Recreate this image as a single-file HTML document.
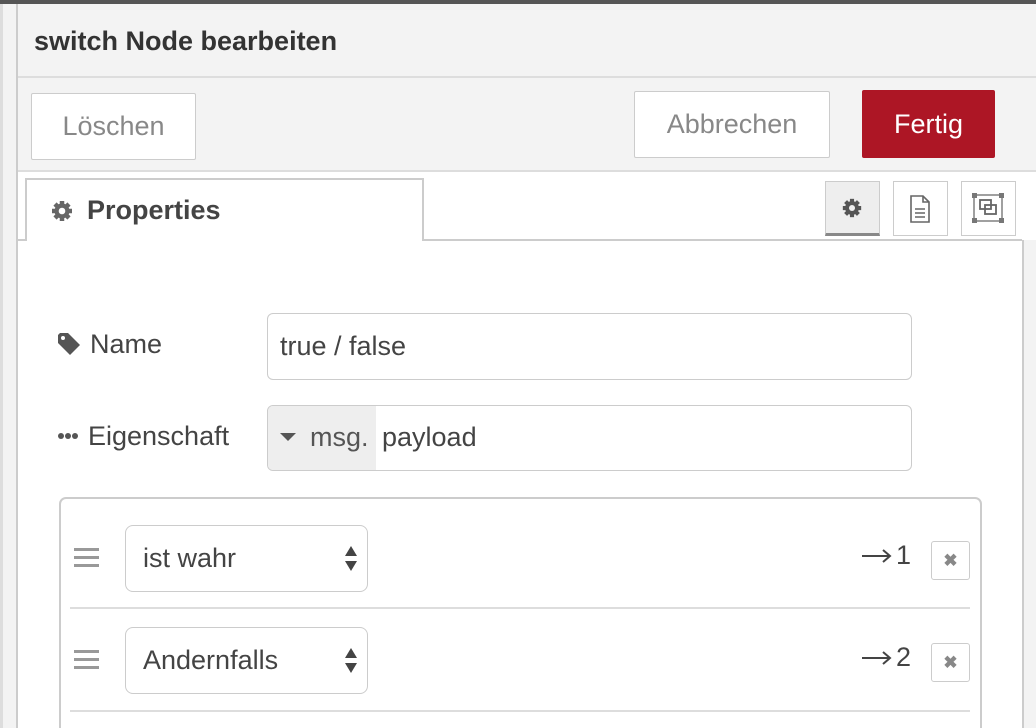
<!DOCTYPE html>
<html><head><meta charset="utf-8"><style>
*{box-sizing:border-box;margin:0;padding:0}
html,body{width:1036px;height:728px;overflow:hidden}
body{background:#fff;font-family:"Liberation Sans",Helvetica,Arial,sans-serif;color:#444;position:relative}
.a{position:absolute}
.btn{position:absolute;background:#fff;border:1px solid #ccc;color:#888;font-size:27px;display:flex;align-items:center;justify-content:center;border-radius:2px}
.inp{position:absolute;border:1px solid #ccc;border-radius:6px;background:#fff;font-size:27px;color:#444;overflow:hidden}
.sel{position:absolute;border:1px solid #ccc;border-radius:8px;background:#fff;font-size:27px;color:#444;padding-left:17px;display:flex;align-items:center}
.hd{position:absolute;width:25px;height:3px;background:#999;left:74px}
.x{position:absolute;width:39px;height:39px;border:1px solid #ccc;border-radius:3px;left:931px;display:flex;align-items:center;justify-content:center;color:#888;font-size:17px;font-weight:bold}
.arr{position:absolute;left:862px;font-size:27px;color:#444}
</style></head><body>
<div class="a" style="left:0;top:0;width:1036px;height:4px;background:#555"></div>
<div class="a" style="left:0;top:4px;width:18px;height:724px;background:#f3f3f3;border-right:2px solid #ccc"></div>
<div class="a" style="left:0;top:4px;width:3px;height:724px;background:#ddd"></div>
<div class="a" style="left:1022px;top:240px;width:14px;height:488px;background:#f3f3f3;border-left:2px solid #ccc"></div>
<div class="a" style="left:18px;top:4px;width:1018px;height:74px;background:#f3f3f3;border-bottom:2px solid #ddd"></div>
<div class="a" style="left:34px;top:26px;font-size:27px;font-weight:bold;color:#333">switch Node bearbeiten</div>
<div class="a" style="left:18px;top:78px;width:1018px;height:94px;background:#f3f3f3;border-bottom:2px solid #ddd"></div>
<div class="btn" style="left:31px;top:93px;width:165px;height:67px">Löschen</div>
<div class="btn" style="left:634px;top:91px;width:196px;height:67px">Abbrechen</div>
<div class="btn" style="left:862px;top:90px;width:133px;height:68px;background:#ad1625;border-color:#ad1625;color:#fff">Fertig</div>
<div class="a" style="left:18px;top:239px;width:1004px;height:2px;background:#ccc"></div>
<div class="a" style="left:25px;top:178px;width:399px;height:63px;background:#fff;border:2px solid #ccc;border-bottom:none"></div>
<svg class="a" style="left:50px;top:199px" width="24" height="24" viewBox="0 0 24 24"><g fill="#666"><circle cx="12" cy="12" r="7.5"/><g stroke="#666" stroke-width="4.5"><line x1="12" y1="2" x2="12" y2="22"/><line x1="2" y1="12" x2="22" y2="12"/><line x1="5" y1="5" x2="19" y2="19"/><line x1="19" y1="5" x2="5" y2="19"/></g></g><circle cx="12" cy="12" r="3.3" fill="#fff"/></svg>
<div class="a" style="left:87px;top:195px;font-size:27px;font-weight:bold;color:#444">Properties</div>
<div class="a" style="left:825px;top:181px;width:55px;height:55px;background:#eee;border:1px solid #ccc;border-bottom:3px solid #888"></div>
<svg class="a" style="left:841px;top:197px" width="22" height="22" viewBox="0 0 24 24"><g fill="#555"><circle cx="12" cy="12" r="7.5"/><g stroke="#555" stroke-width="4.5"><line x1="12" y1="2" x2="12" y2="22"/><line x1="2" y1="12" x2="22" y2="12"/><line x1="5" y1="5" x2="19" y2="19"/><line x1="19" y1="5" x2="5" y2="19"/></g></g><circle cx="12" cy="12" r="3.3" fill="#eee"/></svg>
<div class="a" style="left:893px;top:181px;width:55px;height:55px;background:#fff;border:1px solid #ccc"></div>
<svg class="a" style="left:906px;top:194px" width="28" height="30" viewBox="0 0 28 30"><path d="M5 2h12l6 6v20H5z" fill="none" stroke="#666" stroke-width="1.6"/><path d="M17 2v6h6" fill="none" stroke="#666" stroke-width="1.6"/><path d="M9 15h10M9 19h10M9 23h10" stroke="#666" stroke-width="1.6"/></svg>
<div class="a" style="left:961px;top:181px;width:55px;height:55px;background:#fff;border:1px solid #ccc"></div>
<svg class="a" style="left:971px;top:192px" width="34" height="32" viewBox="0 0 34 32"><rect x="3" y="3" width="28" height="26" fill="none" stroke="#777" stroke-width="1.4"/><rect x="9" y="8" width="11" height="9" fill="none" stroke="#666" stroke-width="1.8"/><rect x="14" y="13" width="11" height="9" fill="none" stroke="#666" stroke-width="1.8"/><g fill="#777"><rect x="1" y="1" width="5" height="5"/><rect x="28" y="1" width="5" height="5"/><rect x="1" y="26" width="5" height="5"/><rect x="28" y="26" width="5" height="5"/></g></svg>
<svg class="a" style="left:57px;top:332px" width="25" height="25" viewBox="0 0 25 25"><path d="M1 3v8l12 12 10-10L11 1H3z" fill="#555"/><circle cx="6" cy="6" r="2" fill="#fff"/></svg>
<div class="a" style="left:90px;top:329px;font-size:27px">Name</div>
<div class="inp" style="left:267px;top:313px;width:645px;height:67px;padding:17px 0 0 12px">true / false</div>
<svg class="a" style="left:57px;top:432px" width="24" height="8"><circle cx="4" cy="4" r="3" fill="#555"/><circle cx="11" cy="4" r="3" fill="#555"/><circle cx="18" cy="4" r="3" fill="#555"/></svg>
<div class="a" style="left:88px;top:421px;font-size:27px">Eigenschaft</div>
<div class="inp" style="left:267px;top:405px;width:645px;height:66px"></div>
<div class="a" style="left:268px;top:406px;width:108px;height:64px;background:#eee;border-radius:5px 0 0 5px"></div>
<div class="a" style="left:280px;top:433px;width:0;height:0;border-left:8px solid transparent;border-right:8px solid transparent;border-top:8px solid #555"></div>
<div class="a" style="left:310px;top:422px;font-size:27px;color:#555">msg.</div>
<div class="a" style="left:382px;top:422px;font-size:27px;color:#444">payload</div>
<div class="a" style="left:59px;top:497px;width:923px;height:260px;border:2px solid #ccc;border-radius:7px"></div>
<div class="hd" style="top:548px"></div><div class="hd" style="top:556px"></div><div class="hd" style="top:564px"></div>
<div class="sel" style="left:125px;top:525px;width:243px;height:67px">ist wahr</div>
<svg class="a" style="left:344px;top:545px" width="14" height="27" viewBox="0 0 14 27"><path d="M7 1L13 11H1zM7 26L13 16H1z" fill="#444"/></svg>
<svg class="a" style="left:862px;top:548px" width="30" height="16"><path d="M0 8h28M21 2l7 6-7 6" fill="none" stroke="#444" stroke-width="2"/></svg>
<div class="arr" style="left:896px;top:540px">1</div>
<div class="x" style="top:541px">✖</div>
<div class="a" style="left:70px;top:607px;width:900px;height:2px;background:#ddd"></div>
<div class="hd" style="top:650px"></div><div class="hd" style="top:658px"></div><div class="hd" style="top:666px"></div>
<div class="sel" style="left:125px;top:627px;width:243px;height:67px">Andernfalls</div>
<svg class="a" style="left:344px;top:647px" width="14" height="27" viewBox="0 0 14 27"><path d="M7 1L13 11H1zM7 26L13 16H1z" fill="#444"/></svg>
<svg class="a" style="left:862px;top:650px" width="30" height="16"><path d="M0 8h28M21 2l7 6-7 6" fill="none" stroke="#444" stroke-width="2"/></svg>
<div class="arr" style="left:896px;top:642px">2</div>
<div class="x" style="top:643px">✖</div>
<div class="a" style="left:70px;top:710px;width:900px;height:2px;background:#ddd"></div>
</body></html>
